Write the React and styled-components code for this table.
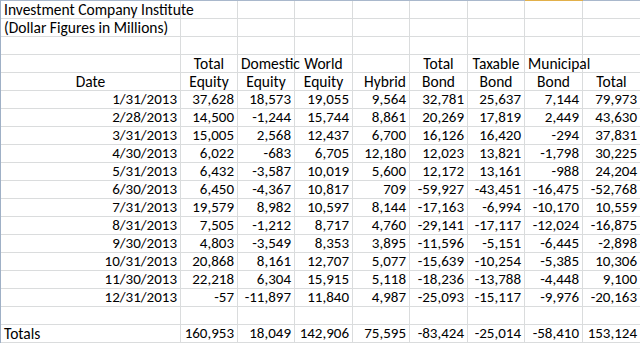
import React from "react";
import styled, { createGlobalStyle } from "styled-components";

const GlobalStyle = createGlobalStyle`
  html, body {
    margin: 0;
    padding: 0;
    background: #ffffff;
    overflow: hidden;
  }
  body {
    font-family: Carlito, Calibri, Lato, "Noto Sans", sans-serif;
    color: #000000;
  }
`;

const COLS = "180px 57px 57px 58px 57px 58px 57px 58px 58px";

const Sheet = styled.div`
  width: 640px;
  height: 343px;
  overflow: hidden;
  border-left: 1px solid #9fb0c6;
  box-sizing: border-box;
`;

const EdgeRow = styled.div`
  display: grid;
  grid-template-columns: ${COLS};
  height: 1px;
`;

const Edge = styled.div`
  background: ${(p) => (p.$active ? "#e2b04a" : "#a9b8cc")};
`;

const Grid = styled.div`
  display: grid;
  grid-template-columns: ${COLS};
  grid-auto-rows: 18px;
`;

const Cell = styled.div`
  box-sizing: border-box;
  border-right: 1px solid #dadcdd;
  border-bottom: 1px solid #dadcdd;
  padding: 0 3px;
  font-size: ${(p) => (p.$text ? "15.5px" : "15px")};
  line-height: 17px;
  white-space: nowrap;
  text-align: ${(p) => p.$align || "right"};
`;

const data = [
  ["1/31/2013", "37,628", "18,573", "19,055", "9,564", "32,781", "25,637", "7,144", "79,973"],
  ["2/28/2013", "14,500", "-1,244", "15,744", "8,861", "20,269", "17,819", "2,449", "43,630"],
  ["3/31/2013", "15,005", "2,568", "12,437", "6,700", "16,126", "16,420", "-294", "37,831"],
  ["4/30/2013", "6,022", "-683", "6,705", "12,180", "12,023", "13,821", "-1,798", "30,225"],
  ["5/31/2013", "6,432", "-3,587", "10,019", "5,600", "12,172", "13,161", "-988", "24,204"],
  ["6/30/2013", "6,450", "-4,367", "10,817", "709", "-59,927", "-43,451", "-16,475", "-52,768"],
  ["7/31/2013", "19,579", "8,982", "10,597", "8,144", "-17,163", "-6,994", "-10,170", "10,559"],
  ["8/31/2013", "7,505", "-1,212", "8,717", "4,760", "-29,141", "-17,117", "-12,024", "-16,875"],
  ["9/30/2013", "4,803", "-3,549", "8,353", "3,895", "-11,596", "-5,151", "-6,445", "-2,898"],
  ["10/31/2013", "20,868", "8,161", "12,707", "5,077", "-15,639", "-10,254", "-5,385", "10,306"],
  ["11/30/2013", "22,218", "6,304", "15,915", "5,118", "-18,236", "-13,788", "-4,448", "9,100"],
  ["12/31/2013", "-57", "-11,897", "11,840", "4,987", "-25,093", "-15,117", "-9,976", "-20,163"],
];

const totals = ["Totals", "160,953", "18,049", "142,906", "75,595", "-83,424", "-25,014", "-58,410", "153,124"];

const headTop = ["", "Total", "Domestic", "World", "", "Total", "Taxable", "Municipal", ""];
const headBottom = ["Date", "Equity", "Equity", "Equity", "Hybrid", "Bond", "Bond", "Bond", "Total"];

const blank = Array(9).fill("");
const isNumber = (s) => /^[-\d,\/]+$/.test(s);

function Row({ cells, align }) {
  return cells.map((c, i) => (
    <Cell
      key={i}
      $text={c !== "" && !isNumber(c)}
      $align={typeof align === "function" ? align(i) : align}
    >
      {c}
    </Cell>
  ));
}

export default function App() {
  return (
    <>
      <GlobalStyle />
      <Sheet>
        <EdgeRow>
          {blank.map((_, i) => (
            <Edge key={i} $active={i === 7} />
          ))}
        </EdgeRow>
        <Grid>
          <Row cells={["Investment Company Institute", "", "", "", "", "", "", "", ""]} align="left" />
          <Row cells={["(Dollar Figures in Millions)", "", "", "", "", "", "", "", ""]} align="left" />
          <Row cells={blank} />
          <Row cells={headTop} align="center" />
          <Row cells={headBottom} align={(i) => (i === 4 ? "right" : "center")} />
          {data.map((r, i) => (
            <Row key={i} cells={r} />
          ))}
          <Row cells={blank} />
          <Row cells={totals} align={(i) => (i === 0 ? "left" : "right")} />
        </Grid>
      </Sheet>
    </>
  );
}
